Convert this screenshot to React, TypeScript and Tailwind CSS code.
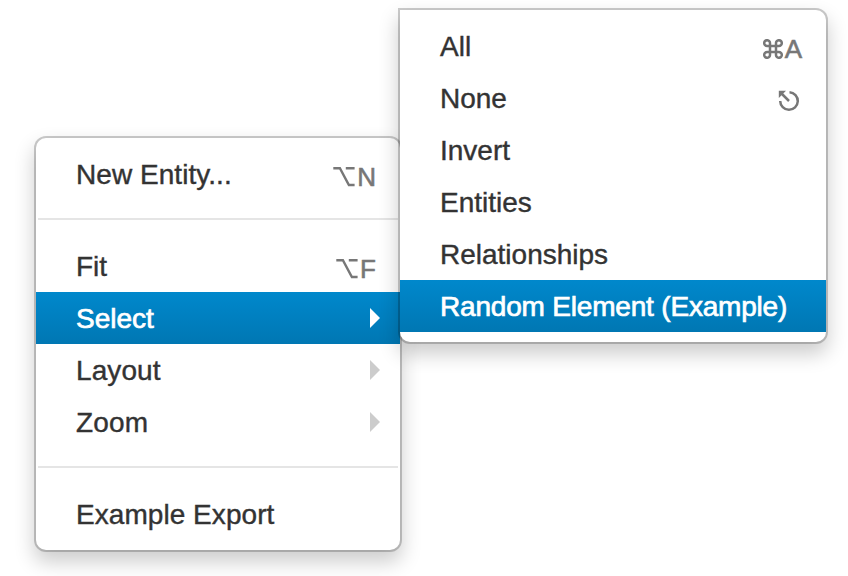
import type { ReactNode } from "react";

const panel =
  "bg-white shadow-[0_0_0_2px_rgba(0,0,0,0.2),0_10px_20px_2px_rgba(0,0,0,0.2)] py-[10px]";

function OptionKey() {
  return (
    <svg width="22" height="20" viewBox="0 0 22 20" fill="none" stroke="currentColor" strokeWidth="2.4">
      <path d="M0.3 1.2H6.9L15.9 18H21.6M12.8 1.2H21.6" />
    </svg>
  );
}

function CommandKey() {
  return (
    <svg width="20" height="20" viewBox="0 0 20 20" fill="none" stroke="currentColor" strokeWidth="2.5">
      <path d="M7 4.2A2.9 2.9 0 1 0 4.1 7H15.9A2.9 2.9 0 1 0 13 4.2V15.8A2.9 2.9 0 1 0 15.9 13H4.1A2.9 2.9 0 1 0 7 15.8Z" />
    </svg>
  );
}

function EscapeKey() {
  return (
    <svg width="22" height="22" viewBox="0 0 22 22" fill="none" stroke="currentColor" strokeWidth="2.5" className="mr-[2px]">
      <path d="M11.5 2.2A8.8 8.8 0 1 1 2.2 11" />
      <path d="M3.5 3.5L11 11" />
      <path d="M0.8 0.8H8L0.8 8Z" fill="currentColor" stroke="none" />
    </svg>
  );
}

interface ItemProps {
  label: string;
  tracking?: string;
  active?: boolean;
  submenu?: boolean;
  children?: ReactNode;
}

function Item({ label, tracking = "", active, submenu, children }: ItemProps) {
  return (
    <li
      className={`flex h-[52px] items-center justify-between pl-10 ${
        submenu ? "pr-5" : "pr-6"
      } ${active ? "bg-linear-to-b from-[#0088cc] to-[#0077b3] text-white" : "text-[#333]"}`}
    >
      <span
        className={`whitespace-nowrap pt-[2px] leading-10 ${
          active ? "[-webkit-text-stroke:0.7px_currentColor]" : "[-webkit-text-stroke:0.4px_currentColor]"
        } ${tracking}`}
      >
        {label}
      </span>
      {submenu && (
        <svg width="10" height="20" viewBox="0 0 10 20" className={active ? "fill-white" : "fill-[#ccc]"}>
          <path d="M0 0L10 10L0 20Z" />
        </svg>
      )}
      {children}
    </li>
  );
}

function Shortcut({ icon, letter }: { icon: ReactNode; letter?: string }) {
  return (
    <span className="flex items-center gap-[2px] pt-[5px] text-[26px] leading-10 text-[#777]">
      {icon}
      {letter && <span className="pt-[1px] [-webkit-text-stroke:0.6px_currentColor]">{letter}</span>}
    </span>
  );
}

function Divider() {
  return <li className="mx-[2px] mt-[18px] mb-5 h-[2px] bg-[#e5e5e5]" />;
}

export default function App() {
  return (
    <div className="relative h-[576px] w-[848px] overflow-hidden bg-white pt-[138px] pl-9 font-['Liberation_Sans',Arial,sans-serif] text-[28px]">
      <ul className={`w-[364px] rounded-[10px] ${panel}`}>
        <Item label="New Entity..." tracking="tracking-[0.05px]">
          <Shortcut icon={<OptionKey />} letter="N" />
        </Item>
        <Divider />
        <Item label="Fit">
          <Shortcut icon={<OptionKey />} letter="F" />
        </Item>
        <Item label="Select" active submenu />
        <Item label="Layout" tracking="tracking-[0.1px]" submenu />
        <Item label="Zoom" tracking="tracking-[0.2px]" submenu />
        <Divider />
        <Item label="Example Export" tracking="tracking-[0.05px]" />
      </ul>
      <ul className={`absolute top-[10px] left-[400px] w-[426px] rounded-[10px] rounded-tl-none ${panel}`}>
        <Item label="All">
          <Shortcut icon={<CommandKey />} letter="A" />
        </Item>
        <Item label="None">
          <Shortcut icon={<EscapeKey />} />
        </Item>
        <Item label="Invert" />
        <Item label="Entities" />
        <Item label="Relationships" />
        <Item label="Random Element (Example)" tracking="tracking-[-0.19px]" active />
      </ul>
    </div>
  );
}
